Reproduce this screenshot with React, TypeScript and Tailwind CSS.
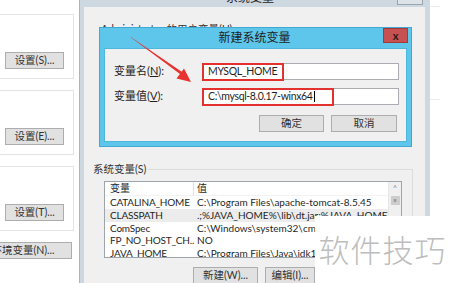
const font = "font-['Lato','Noto_Sans_CJK_SC',sans-serif]";

type Row = { name: string; value: string; active?: boolean };

const rows: Row[] = [
  { name: 'CATALINA_HOME', value: 'C:\\Program Files\\apache-tomcat-8.5.45' },
  { name: 'CLASSPATH', value: '.;%JAVA_HOME%\\lib\\dt.jar;%JAVA_HOME...', active: true },
  { name: 'ComSpec', value: 'C:\\Windows\\system32\\cmd.exe' },
  { name: 'FP_NO_HOST_CH...', value: 'NO' },
  { name: 'JAVA_HOME', value: 'C:\\Program Files\\Java\\jdk1.8.0_201' },
];

const WinButton = ({ label, className = '' }: { label: string; className?: string }) => (
  <div
    className={`h-[17px] flex items-center justify-center bg-[#e1e1e1] border border-[#adadad] text-[10.5px] text-[#333] whitespace-nowrap ${className}`}
  >
    {label}
  </div>
);

const Card = ({ label }: { label: string }) => (
  <div className="h-[65px] w-[80px] -ml-[6px] border border-[#e3e3e3] bg-white flex flex-col justify-end pb-[9px] pl-[10px]">
    <WinButton label={label} className="w-[59px]" />
  </div>
);

const Arrow = () => (
  <svg className="absolute left-0 top-0 pointer-events-none" width="450" height="283">
    <polygon points="130,36.5 131,37.5 182,75.5 183.5,73" fill="#e8322f" />
    <polygon points="191,82 176.5,78.5 184,68.5" fill="#e8322f" />
  </svg>
);

export default function App() {
  return (
    <div className={`relative w-[450px] h-[283px] overflow-hidden bg-white flex ${font}`}>
      {/* left: previous window */}
      <div className="w-[79px] shrink-0 flex flex-col pt-[14px] gap-[11px] overflow-hidden">
        <Card label="设置(S)..." />
        <Card label="设置(E)..." />
        <Card label="设置(T)..." />
        <WinButton label="环境变量(N)..." className="w-[98px] -ml-[26px]" />
      </div>

      {/* background dialog */}
      <div className="w-[351px] shrink-0 flex flex-col border-l border-[#a9b6c0] bg-[#cdd8e0]">
        <div className="h-[7px] relative">
          <div className="absolute left-[146px] -top-[8px] text-[12px] text-[#222] leading-none">系统变量</div>
          <div className="absolute left-[317px] -top-[6px] w-[26px] h-[11px] border border-[#9aa5ad] bg-[#dce4ea]" />
        </div>
        <div className="flex-1 ml-[4px] mr-[5px] bg-[#f0f0f0] flex flex-col">
          <div className="h-[20px] pl-[17px] pt-[17px] text-[10.5px] leading-none text-[#333] whitespace-nowrap">Administrator 的用户变量(U)</div>
          <div className="h-[113px]" />
          <div className="relative mx-[12px] mt-[29px] flex-1 border-t border-r border-[#dcdcdc]">
            <div className="absolute -left-[3px] -top-[6px] pr-[2px] text-[10.5px] text-[#333] leading-none bg-[#f0f0f0]">系统变量(S)</div>
          </div>
        </div>
      </div>

      {/* right strip */}
      <div className="flex-1 flex flex-col bg-white">
        <div className="h-[7px] border-b border-[#ececec] w-[10px]" />
        <div className="h-[93px] border-b border-[#ececec] w-[10px]" />
      </div>

      {/* system variables list */}
      <div className="absolute left-[104px] top-[181px] w-[298px] h-[77px] bg-white border border-[#9ea4ab] flex overflow-hidden text-[10px] text-[#1f1f1f] leading-[13px]">
        <div className="flex-1 flex flex-col min-w-0">
          <div className="h-[14px] flex items-center border-b border-[#f2f2f2] shrink-0">
            <div className="w-[89px] pl-[5px] border-r border-[#e3e3e3] h-full flex items-center">变量</div>
            <div className="pl-[3px]">值</div>
          </div>
          {rows.map((r) => (
            <div
              key={r.name}
              className={`h-[12.8px] shrink-0 flex items-center whitespace-nowrap ${r.active ? 'bg-[#ececec]' : ''}`}
            >
              <div className="w-[89px] shrink-0 pl-[5px] overflow-x-clip tracking-[-0.2px]">{r.name}</div>
              <div className="pl-[3px] overflow-x-clip">{r.value}</div>
            </div>
          ))}
        </div>
        <div className="w-[13px] shrink-0 bg-[#f0f0f0] border-l border-[#e6e6e6] flex flex-col items-center text-[7px] text-[#888] leading-none">
          <div className="h-[13px] flex items-center">^</div>
          <div className="w-[9px] h-[9px] mt-[1px] bg-[#cdcdcd] flex items-center justify-center text-[6px] text-[#777]">≡</div>
        </div>
      </div>

      {/* bottom buttons of background dialog */}
      <div className="absolute left-[193px] top-[267px] flex gap-[7px]">
        <WinButton label="新建(W)..." className="w-[65px]" />
        <WinButton label="编辑(I)..." className="w-[50px]" />
        <WinButton label="删除(L)" className="w-[50px]" />
      </div>

      {/* modal: 新建系统变量 */}
      <div className="absolute left-[99px] top-[27px] w-[313px] h-[120px] bg-[#5ec6ea] border border-[#3fa9d4] flex flex-col px-[4px] pb-[4px]">
        <div className="h-[20px] shrink-0 relative flex items-center justify-center">
          <span className="text-[12px] text-[#1d1d1d] ml-[-2px]">新建系统变量</span>
          <div className="absolute right-[-1px] top-0 w-[25px] h-[15px] bg-[#c75050] border border-[#a53a3a] flex items-center justify-center text-[11px] font-bold text-[#2a1a1a] leading-none">
            x
          </div>
        </div>
        <div className="flex-1 bg-[#f0f0f0] border border-[#4fb6de] pt-[14px] pl-[9px] flex flex-col text-[11px] text-[#1f1f1f]">
          <div className="flex items-center h-[17px]">
            <div className="w-[89px] shrink-0">
              变量名(<span className="underline">N</span>):
            </div>
            <div className="relative w-[196px] h-[17px] bg-white border border-[#abadb3] flex items-center pl-[4px] text-[10.5px] tracking-[-0.35px]">
              MYSQL_HOME
              <div className="absolute -left-[2px] -top-[1px] w-[82px] h-[18px] border-2 border-[#e2312f]" />
            </div>
          </div>
          <div className="flex items-center h-[17px] mt-[8px]">
            <div className="w-[89px] shrink-0">
              变量值(<span className="underline">V</span>):
            </div>
            <div className="relative w-[196px] h-[17px] bg-white border border-[#abadb3] flex items-center pl-[4px] text-[10.5px] tracking-[-0.35px]">
              C:\mysql-8.0.17-winx64
              <span className="w-px h-[11px] bg-black ml-[1px]" />
              <div className="absolute -left-[2px] -top-[1px] w-[132px] h-[18px] border-2 border-[#e2312f]" />
            </div>
          </div>
          <div className="flex justify-end gap-[7px] mt-[10px] pr-[9px]">
            <WinButton label="确定" className="w-[65px]" />
            <WinButton label="取消" className="w-[66px]" />
          </div>
        </div>
      </div>

      <Arrow />

      {/* watermark */}
      <div className="absolute left-[315px] top-[216px] w-[135px] h-[67px] bg-white flex items-center justify-center">
        <span className="text-[31px] font-light text-[#bdbdbd] tracking-[1px] font-['Noto_Sans_CJK_SC',sans-serif]">软件技巧</span>
      </div>
    </div>
  );
}
